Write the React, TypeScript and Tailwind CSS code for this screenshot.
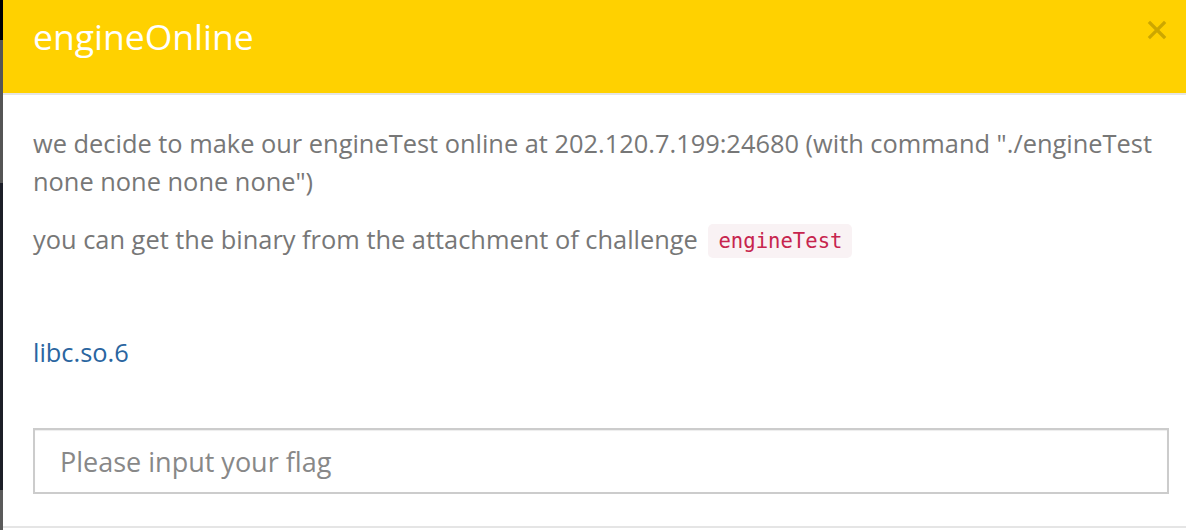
export default function App() {
  return (
    <div className="flex h-[530px] w-[1186px] overflow-hidden bg-white" style={{ fontFamily: '"Open Sans", "Noto Sans", sans-serif' }}>
      {/* page behind the modal */}
      <div className="flex w-[3px] shrink-0 flex-col">
        <div className="h-[40px] bg-black" />
        <div className="h-[143px] bg-[#555555]" />
        <div className="h-[307px] bg-[#1c1f28]" />
        <div className="flex-1 bg-[#5a5a5a]" />
      </div>

      <div className="flex flex-1 flex-col">
        <div className="flex h-[93px] shrink-0 items-start justify-between bg-[#ffd100] pl-[30px] pr-[15px]">
          <h4 className="mt-[13px] text-[35.5px] leading-[46px] text-white">engineOnline</h4>
          <button className="mt-[16px] flex h-[28px] w-[28px] items-center justify-center text-[#cca700]">
            <svg width="20" height="20" viewBox="0 0 20 20" fill="none" stroke="currentColor" strokeWidth="3.2" strokeLinecap="square">
              <path d="M3 3 L17 17 M17 3 L3 17" />
            </svg>
          </button>
        </div>
        <div className="h-[2px] bg-[#e5e5e5]" />

        <div className="flex flex-col pb-[32px] pl-[30px] pr-[17px] pt-[29px] text-[25.4px] leading-[38px] text-[#777777]">
          <p>we decide to make our engineTest online at 202.120.7.199:24680 (with command "./engineTest none none none none")</p>
          <p className="mt-[20px] h-[38px]">
            you can get the binary from the attachment of challenge{" "}
            <code className="ml-[4px] rounded-[5px] bg-[#f9f2f4] px-[10px] py-[5px] align-[1px] text-[20.6px] leading-[24px] text-[#c7254e]" style={{ fontFamily: '"DejaVu Sans Mono", monospace' }}>
              engineTest
            </code>
          </p>
          <a href="#" className="mt-[75px] self-start text-[#2a65a0]">libc.so.6</a>
          <input
            type="text"
            placeholder="Please input your flag"
            className="mt-[57px] h-[66px] w-full border-2 border-[#cccccc] px-[25px] text-[27px] text-[#555] shadow-[inset_0_1px_1px_rgba(0,0,0,0.075)] outline-none placeholder:text-[#888888]"
          />
        </div>
        <div className="flex-1 border-t-2 border-[#e5e5e5]" />
      </div>
    </div>
  )
}
